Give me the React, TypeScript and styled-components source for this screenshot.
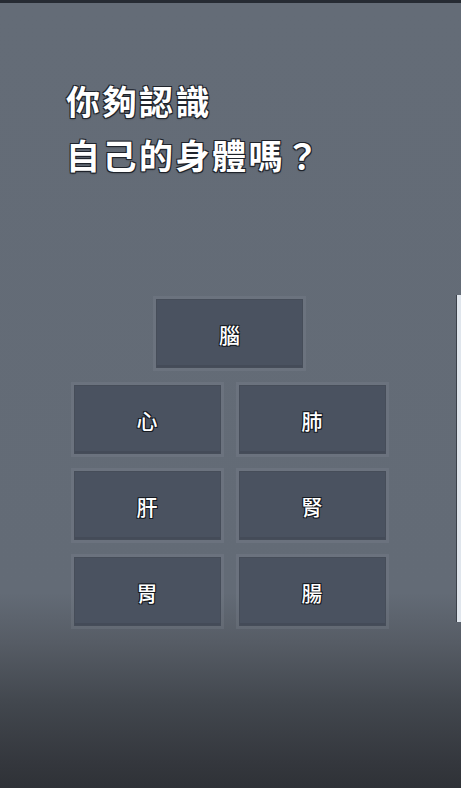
import React from "react";
import styled, { createGlobalStyle } from "styled-components";

const Global = createGlobalStyle`
  html, body { margin: 0; padding: 0; }
  body {
    background: #2e3137;
    font-family: "Noto Sans CJK TC", "Noto Sans", sans-serif;
  }
`;

const Screen = styled.div`
  position: relative;
  width: 461px;
  height: 788px;
  box-sizing: border-box;
  border-top: 3px solid #262b33;
  background: linear-gradient(
    to bottom,
    #646c77 0px,
    #636b76 590px,
    #565c65 640px,
    #42474e 700px,
    #34373d 760px,
    #2e3136 788px
  );
  display: flex;
  flex-direction: column;
  overflow: hidden;
`;

const Title = styled.h1`
  margin: 0;
  padding: 71px 0 0 66px;
  color: #ffffff;
  font-family: "Noto Sans CJK TC", "Noto Sans", sans-serif;
  font-size: 34px;
  font-weight: 700;
  line-height: 54px;
  letter-spacing: 2.5px;
  text-shadow:
    -1px -1px 0 #1e232b, 1px -1px 0 #1e232b, -1px 1px 0 #1e232b, 1px 1px 0 #1e232b,
    0 1px 2px rgba(0, 0, 0, 0.6);
`;

const Board = styled.div`
  margin: 117px auto 0;
  width: 312px;
  transform: translateX(-1px);
  display: grid;
  grid-template-columns: 147px 147px;
  column-gap: 18px;
  row-gap: 17px;
  justify-content: center;
`;

const Organ = styled.button<{ $top?: boolean }>`
  grid-column: ${(p) => (p.$top ? "1 / span 2" : "auto")};
  justify-self: ${(p) => (p.$top ? "center" : "stretch")};
  width: 147px;
  height: 69px;
  box-sizing: border-box;
  padding: 0;
  margin: 0;
  border: 1px solid #464d59;
  background: #4a5260;
  box-shadow: 0 0 0 3px rgba(150, 158, 170, 0.16), inset 0 -2px 0 rgba(0, 0, 0, 0.08);
  color: #ffffff;
  font-family: "Noto Sans CJK TC", "Noto Sans", sans-serif;
  font-size: 21px;
  font-weight: 500;
  display: flex;
  align-items: center;
  justify-content: center;
  text-shadow:
    -1px -1px 0 #15191f, 1px -1px 0 #15191f, -1px 1px 0 #15191f, 1px 1px 0 #15191f;
  cursor: pointer;
`;

const ScrollThumb = styled.div`
  position: absolute;
  right: 0;
  top: 292px;
  width: 4px;
  height: 327px;
  background: #dfe5ec;
  border-left: 1px solid #3c424b;
`;

const organs = ["心", "肺", "肝", "腎", "胃", "腸"];

export default function App() {
  return (
    <>
      <Global />
      <Screen>
        <Title>
          你夠認識
          <br />
          自己的身體嗎？
        </Title>
        <Board>
          <Organ $top>腦</Organ>
          {organs.map((o) => (
            <Organ key={o}>{o}</Organ>
          ))}
        </Board>
        <ScrollThumb />
      </Screen>
    </>
  );
}
